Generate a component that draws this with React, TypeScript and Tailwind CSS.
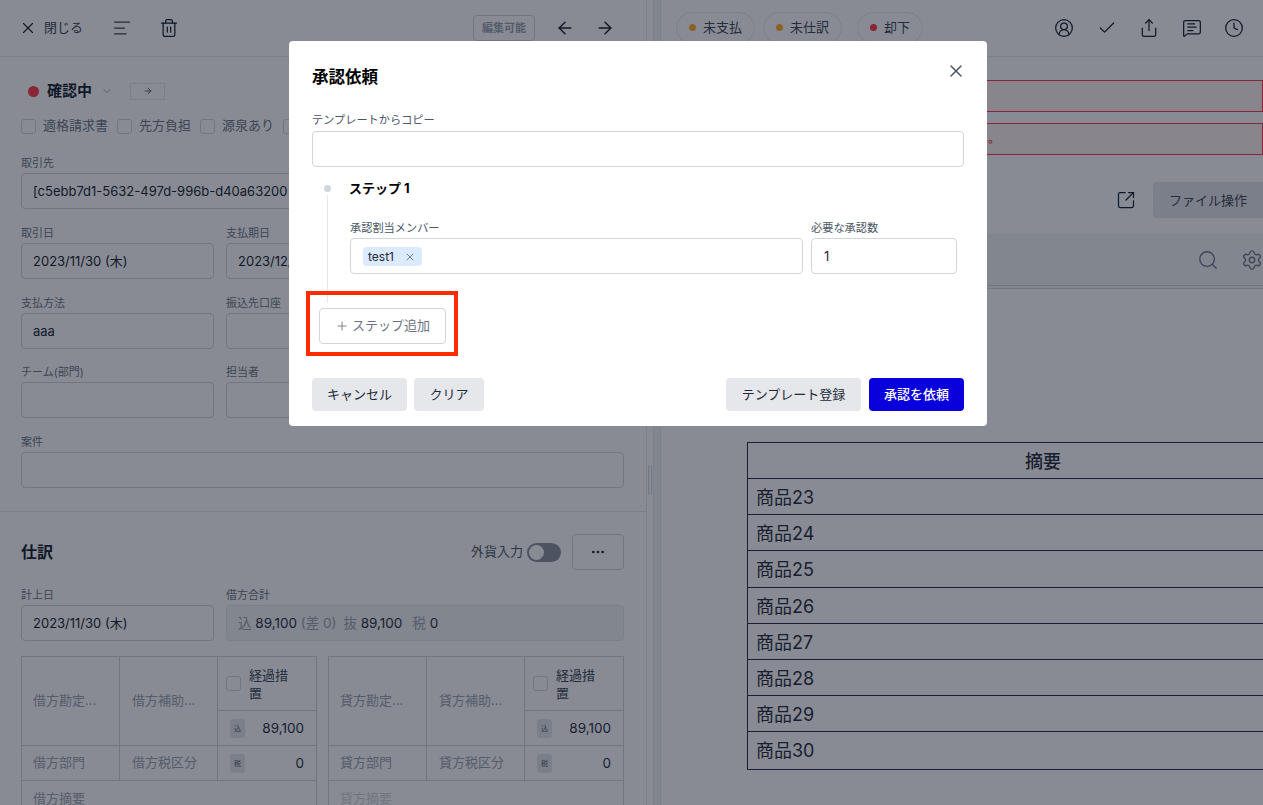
import React from 'react';
import { X, ArrowLeft, ArrowRight, Trash2, ChevronDown, CircleUserRound, Check, Share, MessageSquareText, Clock, SquareArrowOutUpRight, Search, Settings, Plus, Ellipsis, AlignLeft } from 'lucide-react';

const Field = ({ label, value, className = '' }: { label: string; value?: string; className?: string }) => (
  <div className={className}>
    <div className="h-[16px] text-[11px] leading-[12px] text-gray-500">{label}</div>
    <div className="h-9 rounded border border-gray-300 bg-white px-[11px] text-[13px] leading-[34px] text-gray-900 overflow-hidden whitespace-nowrap">{value}</div>
  </div>
);

const Box = ({ label }: { label: string }) => (
  <label className="flex items-center gap-[7px] text-[13px] text-gray-500">
    <span className="w-[15px] h-[15px] rounded-[3px] border border-gray-300 bg-white shrink-0" />
    <span className="whitespace-nowrap">{label}</span>
  </label>
);

const Chip = ({ label, color }: { label: string; color: string }) => (
  <div className="flex items-center gap-[7px] h-[32px] px-3 rounded-full border border-gray-200 text-[13px] text-gray-700">
    <span className={`w-[7px] h-[7px] rounded-full ${color}`} />
    {label}
  </div>
);

const Journal = ({ side, faint }: { side: string; faint?: boolean }) => (
  <div className="w-[296px] border border-gray-300 text-[13px] text-gray-400 grid grid-cols-[98px_98px_1fr]">
    <div className="row-span-2 flex items-center pl-[11px] border-r border-b border-gray-300">{side}方勘定...</div>
    <div className="row-span-2 flex items-center pl-[12px] border-r border-b border-gray-300">{side}方補助...</div>
    <div className="h-[54px] flex items-center gap-2 pl-2 border-b border-gray-300 text-gray-700">
      <span className="w-[15px] h-[15px] rounded-[3px] border border-gray-300 bg-white shrink-0" />
      <span className="leading-[18px] w-[42px]">経過措置</span>
    </div>
    <div className="h-[35px] flex items-center justify-between pl-3 pr-3 border-b border-gray-300 text-[13.5px] text-gray-800">
      <span className="w-[15px] h-[19px] rounded-[3px] bg-gray-200 text-[7px] leading-[19px] text-center text-gray-600">込</span>
      89,100
    </div>
    <div className="h-[35px] flex items-center pl-[11px] border-r border-b border-gray-300">{side}方部門</div>
    <div className="h-[35px] flex items-center pl-[12px] border-r border-b border-gray-300">{side}方税区分</div>
    <div className="h-[35px] flex items-center justify-between pl-3 pr-3 border-b border-gray-300 text-[13.5px] text-gray-800">
      <span className="w-[15px] h-[19px] rounded-[3px] bg-gray-200 text-[7px] leading-[19px] text-center text-gray-600">税</span>
      0
    </div>
    <div className={`col-span-3 h-[35px] flex items-center pl-[11px] ${faint ? 'text-gray-300' : ''}`}>{side}方摘要</div>
  </div>
);

const items = ['商品23', '商品24', '商品25', '商品26', '商品27', '商品28', '商品29', '商品30'];

export default function App() {
  return (
    <div className="relative w-screen h-screen overflow-hidden flex bg-white text-gray-900 font-['Inter','Noto_Sans_CJK_JP',sans-serif]">
      {/* left pane */}
      <div className="w-[647px] shrink-0 border-r border-gray-200 overflow-hidden">
        <div className="h-[57px] border-b border-gray-200 flex items-center pl-[19px] pr-[31px]">
          <X size={18} strokeWidth={1.5} />
          <span className="ml-[7px] text-[13px] text-gray-700">閉じる</span>
          <AlignLeft size={20} strokeWidth={1.5} className="ml-[29px] text-gray-700" />
          <Trash2 size={20} strokeWidth={1.5} className="ml-[27px]" />
          <span className="ml-auto h-[26px] px-2 rounded border border-gray-300 text-[11px] font-semibold leading-[24px] text-gray-400">編集可能</span>
          <ArrowLeft size={20} strokeWidth={1.75} className="ml-[20px]" />
          <ArrowRight size={20} strokeWidth={1.75} className="ml-[20px]" />
        </div>
        <div className="pl-[21px] pr-[22px] pt-[25px] h-[455px] border-b border-gray-200">
          <div className="flex items-center h-[18px] pl-[7px]">
            <span className="w-[11px] h-[11px] rounded-full bg-[#ff3347]" />
            <span className="ml-[8px] text-[15px] font-bold">確認中</span>
            <ChevronDown size={12} className="ml-[9px] text-gray-400" />
            <span className="ml-[17px] w-[35px] h-[17px] border border-gray-200 flex items-center justify-center">
              <ArrowRight size={10} className="text-gray-700" />
            </span>
          </div>
          <div className="flex gap-[9px] mt-[16px] h-[20px]">
            <Box label="適格請求書" />
            <Box label="先方負担" />
            <Box label="源泉あり" />
            <Box label="" />
          </div>
          <div className="mt-[21px] flex flex-col gap-[17.75px]">
            <Field label="取引先" value="[c5ebb7d1-5632-497d-996b-d40a63200" />
            <div className="grid grid-cols-3 gap-x-3 gap-y-[17.75px]">
              <Field label="取引日" value="2023/11/30 (木)" />
              <Field label="支払期日" value="2023/12/31 (日)" />
              <Field label="" />
              <Field label="支払方法" value="aaa" />
              <Field label="振込先口座" />
              <Field label="" />
              <Field label="チーム(部門)" />
              <Field label="担当者" />
              <Field label="" />
            </div>
            <Field label="案件" />
          </div>
        </div>
        <div className="pl-[21px] pr-[22px]">
          <div className="flex items-center justify-between mt-[22px] h-9">
            <span className="text-[16px] font-bold">仕訳</span>
            <div className="flex items-center">
              <span className="text-[13px] text-gray-600">外貨入力</span>
              <span className="ml-1 w-[34px] h-[19px] rounded-full bg-[#8a8f9b] p-[2px] flex">
                <span className="w-[15px] h-[15px] rounded-full bg-white" />
              </span>
              <span className="ml-[11px] w-[52px] h-9 rounded border border-gray-300 flex items-center justify-center">
                <Ellipsis size={16} />
              </span>
            </div>
          </div>
          <div className="grid grid-cols-3 gap-x-3 mt-[19px]">
            <Field label="計上日" value="2023/11/30 (木)" />
            <div className="col-span-2">
              <div className="h-[16px] text-[11px] leading-[12px] text-gray-500">借方合計</div>
              <div className="h-9 rounded border border-gray-200 bg-gray-100 px-[11px] text-[13.5px] leading-[34px] text-gray-800 whitespace-nowrap">
                <span className="text-gray-400">込</span> 89,100 <span className="text-gray-400">(差 0)</span>
                <span className="ml-[7px] text-gray-400">抜</span> 89,100
                <span className="ml-[10px] text-gray-400">税</span> 0
              </div>
            </div>
          </div>
          <div className="flex justify-between mt-[15px]">
            <Journal side="借" />
            <Journal side="貸" faint />
          </div>
        </div>
      </div>

      {/* splitter */}
      <div className="w-[14px] shrink-0 flex">
        <div className="w-[6px] pt-[465px] flex justify-center">
          <span className="w-[4px] h-[30px] border-x border-gray-300" />
        </div>
        <div className="w-[8px] border-x border-gray-200 bg-gray-100" />
      </div>

      {/* right pane */}
      <div className="flex-1 min-w-0 overflow-hidden">
        <div className="h-[57px] border-b border-gray-200 flex items-center pl-[15px] pr-[19px] gap-2 pb-[1px]">
          <Chip label="未支払" color="bg-[#ffb020]" />
          <Chip label="未仕訳" color="bg-[#ffb020]" />
          <div className="ml-[7px]"><Chip label="却下" color="bg-[#ff3347]" /></div>
          <div className="ml-auto flex items-center gap-[22.5px]">
            <CircleUserRound size={20} strokeWidth={1.5} />
            <Check size={20} strokeWidth={1.5} />
            <Share size={20} strokeWidth={1.5} />
            <MessageSquareText size={20} strokeWidth={1.5} />
            <Clock size={20} strokeWidth={1.5} />
          </div>
        </div>
        <div className="ml-[10px] mt-[23px] h-[32px] border border-[#ff3347] bg-red-50" />
        <div className="ml-[10px] mt-[11px] h-[32px] border border-[#ff3347] bg-red-50 pl-[316px] text-[12px] leading-[30px] text-red-600">。</div>
        <div className="flex items-center justify-end mt-[27px] -mr-[3px]">
          <SquareArrowOutUpRight size={20} strokeWidth={1.5} />
          <span className="ml-[17px] h-9 w-[113px] rounded-l bg-gray-200 pl-4 text-[13px] leading-9 text-gray-700">ファイル操作</span>
        </div>
        <div className="mt-[16px] h-[51px] bg-gray-100 flex items-center justify-end gap-[22px]">
          <Search size={22} strokeWidth={1.5} className="text-gray-500" />
          <Settings size={22} strokeWidth={1.5} className="text-gray-500" />
        </div>
        <div className="h-1 border-y border-gray-300 bg-gray-100" />
        <div className="ml-[86px] mt-[153px] w-[592px] border border-gray-800 text-[18px] text-gray-800">
          <div className="h-[36px] border-b border-gray-800 text-center font-medium leading-[37px]">摘要</div>
          {items.map((t, i) => (
            <div key={t} className={`h-[36.2px] leading-[37px] pl-2 ${i < items.length - 1 ? 'border-b border-gray-800' : ''}`}>{t}</div>
          ))}
        </div>
      </div>

      {/* modal */}
      <div className="absolute inset-0 bg-[#111827]/50 flex items-start pl-[289px] pt-[41px]">
        <div className="relative w-[698px] h-[385px] bg-white rounded px-[23px] pt-[27px]">
          <button className="absolute top-[20px] right-[21px] text-gray-600"><X size={20} strokeWidth={1.75} /></button>
          <h2 className="text-[16.5px] leading-[18px] font-bold text-black">承認依頼</h2>
          <div className="mt-[27px] text-[11.2px] leading-[14px] text-gray-600">テンプレートからコピー</div>
          <div className="mt-[4px] h-9 rounded border border-gray-300" />
          <div className="relative">
            <span className="absolute left-[12px] top-[17.5px] w-[7px] h-[7px] rounded-full bg-gray-300" />
            <span className="absolute left-[15px] top-[28px] w-px h-[108px] bg-gray-200" />
            <div className="pl-[37px] pt-[13px] text-[13px] leading-[16px] font-bold text-black">ステップ 1</div>
            <div className="pl-[38px] pr-[7px] pt-[25px] flex gap-2">
              <div className="flex-1">
                <div className="text-[11.2px] leading-[14px] text-gray-600">承認割当メンバー</div>
                <div className="mt-[3px] h-9 rounded border border-gray-300 flex items-center pl-[12px] pt-[1px]">
                  <span className="h-[19px] pl-[5px] pr-[6px] rounded bg-blue-100 flex items-center gap-[10px] text-[12px] text-gray-800">
                    test1
                    <X size={12} strokeWidth={1.75} className="text-gray-500" />
                  </span>
                </div>
              </div>
              <div className="w-[146px]">
                <div className="text-[11.2px] leading-[14px] text-gray-600">必要な承認数</div>
                <div className="mt-[3px] h-9 rounded border border-gray-300 pl-[12px] text-[13px] leading-[34px] text-gray-800">1</div>
              </div>
            </div>
          </div>
          <button className="ml-[7px] mt-[34px] h-9 w-[127px] rounded border border-gray-300 flex items-center justify-center gap-[3px] text-[13px] text-gray-500">
            <Plus size={14} strokeWidth={1.5} />
            ステップ追加
          </button>
          <div className="mt-[34px] flex items-center gap-2 text-[13px] text-gray-800">
            <button className="h-[33px] w-[95px] rounded bg-gray-200">キャンセル</button>
            <button className="-ml-px h-[33px] w-[70px] rounded bg-gray-200">クリア</button>
            <button className="ml-auto h-[33px] w-[135px] rounded bg-gray-200">テンプレート登録</button>
            <button className="h-[33px] w-[95px] rounded bg-[#0a00dc] text-white font-medium">承認を依頼</button>
          </div>
        </div>
        {/* annotation */}
        <div className="absolute left-[306px] top-[291px] w-[152px] h-[65px] border-4 border-[#fb2c00]" />
      </div>
    </div>
  );
}
